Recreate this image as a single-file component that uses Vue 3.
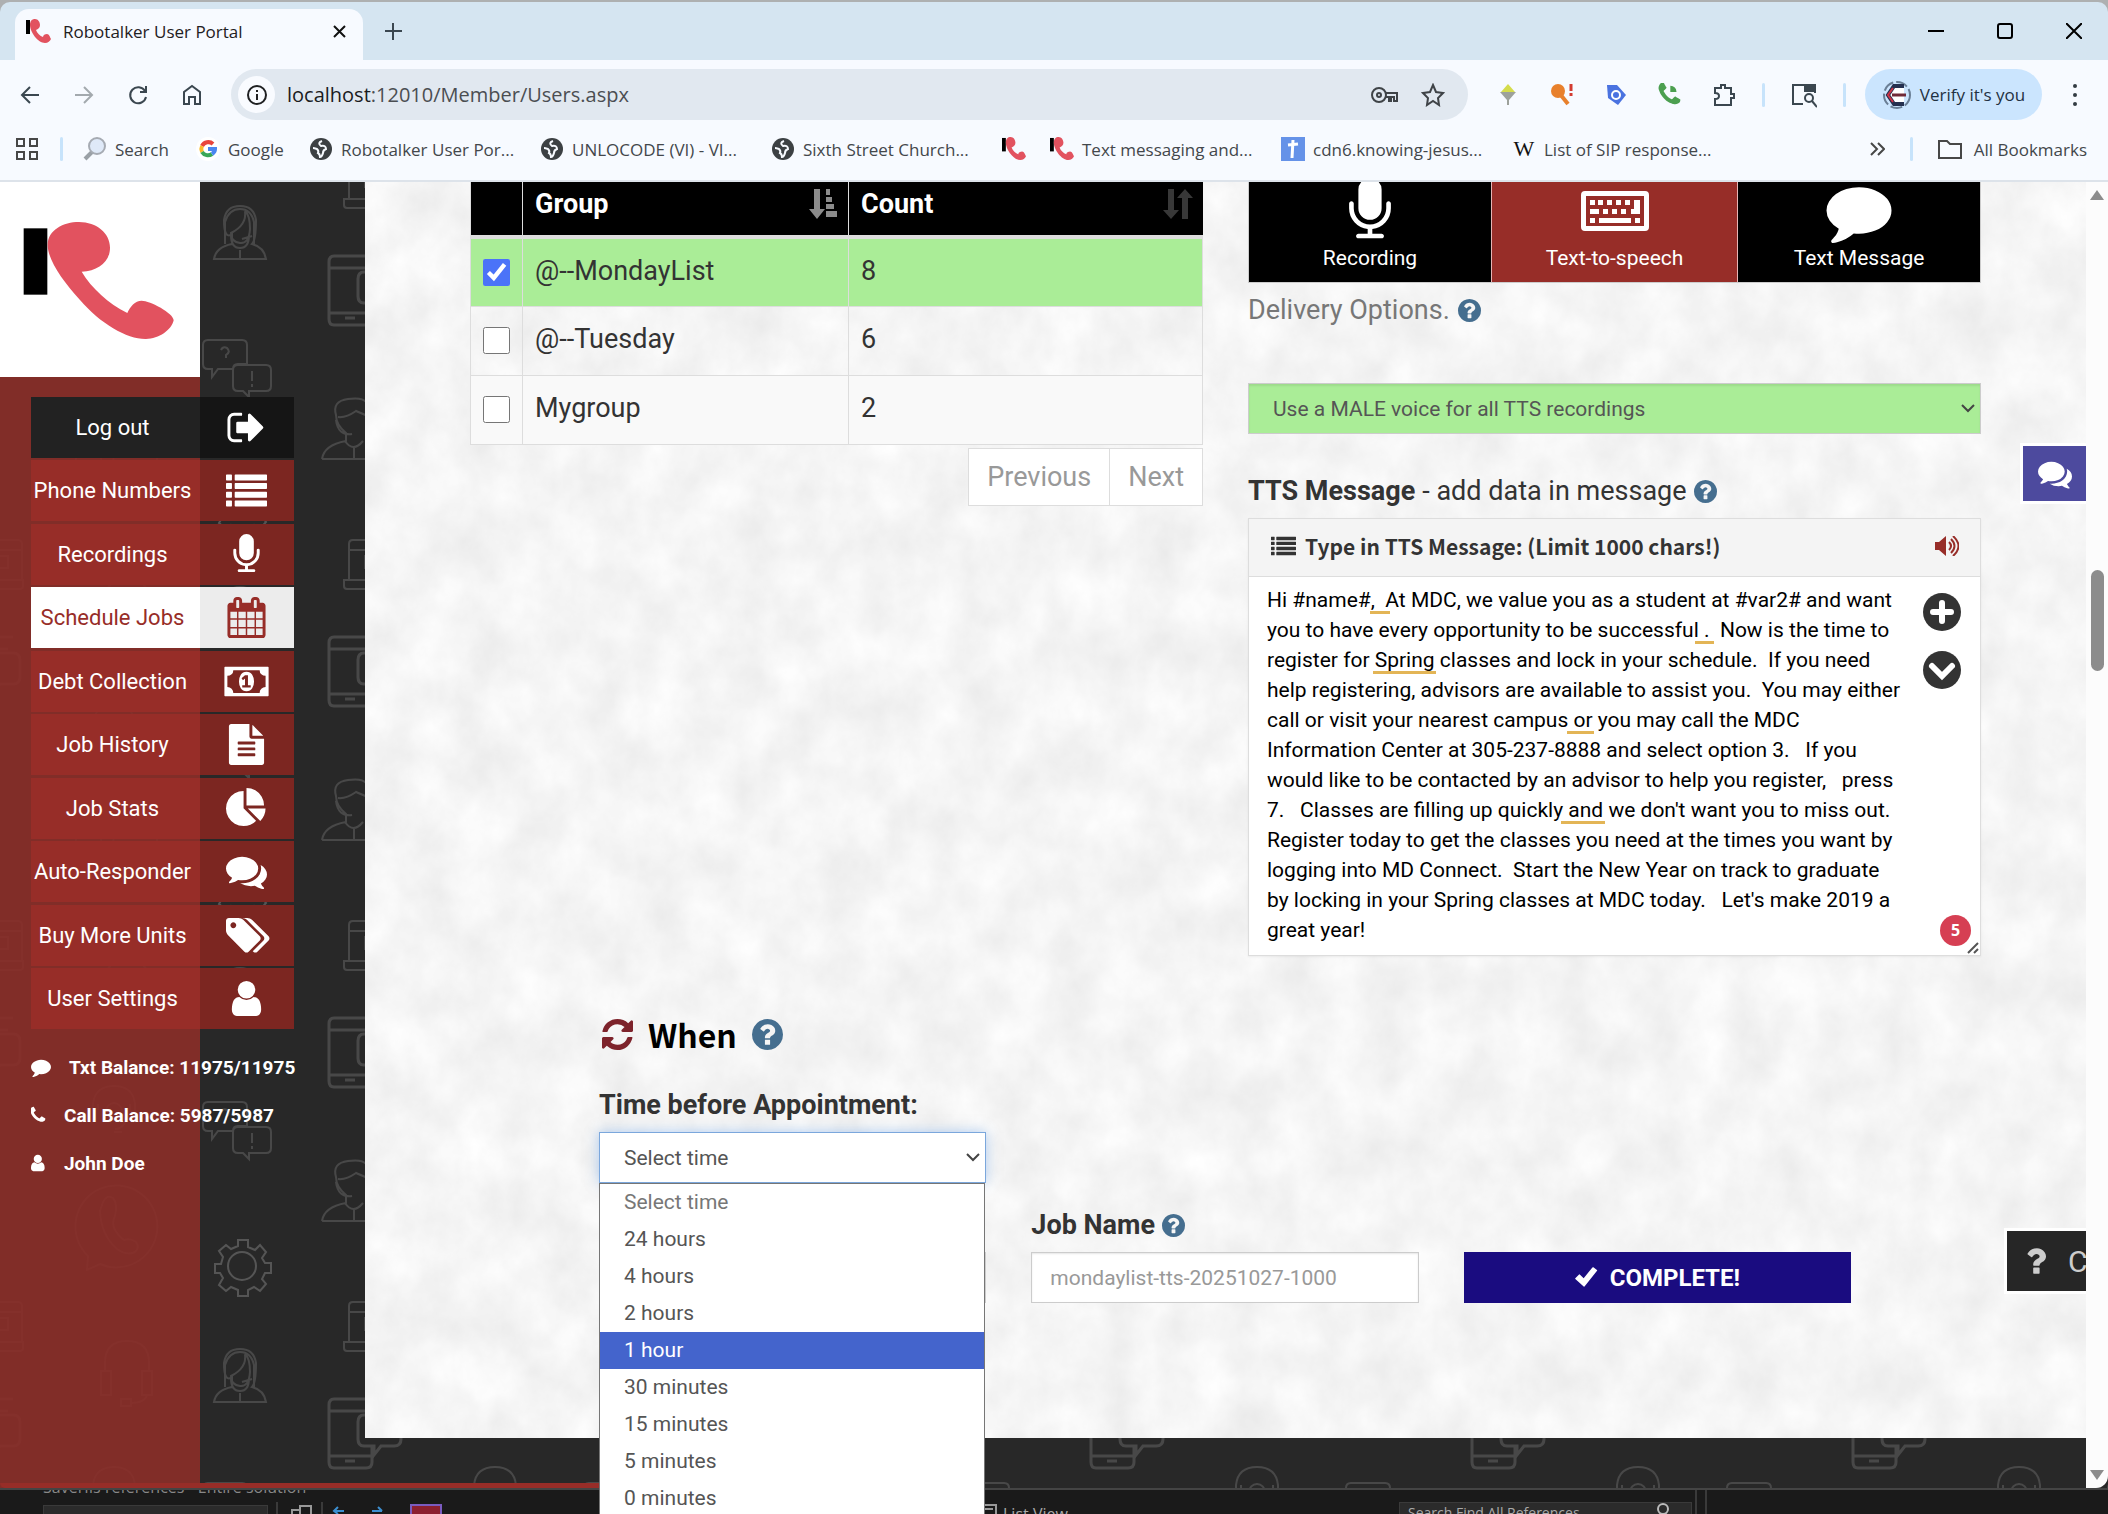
<script setup>
import { ref } from 'vue'

const icons = {
  signOut: 'M704 1440q0 4 1 20t.5 26.5-3 23.5-10 19.5-20.5 6.5h-320q-119 0-203.5-84.5t-84.5-203.5v-704q0-119 84.5-203.5t203.5-84.5h320q13 0 22.5 9.5t9.5 22.5q0 4 1 20t.5 26.5-3 23.5-10 19.5-20.5 6.5h-320q-66 0-113 47t-47 113v704q0 66 47 113t113 47h312l11.5 1 11.5 3 8 5.5 7 9 2 13.5zm928-544q0 26-19 45l-544 544q-19 19-45 19t-45-19-19-45v-288h-448q-26 0-45-19t-19-45v-384q0-26 19-45t45-19h448v-288q0-26 19-45t45-19 45 19l544 544q19 19 19 45z',
  list: 'M30 200h200q30 0 30 30v200q0 30-30 30h-200q-30 0-30-30v-200q0-30 30-30zM30 570h200q30 0 30 30v200q0 30-30 30h-200q-30 0-30-30v-200q0-30 30-30zM30 950h200q30 0 30 30v200q0 30-30 30h-200q-30 0-30-30v-200q0-30 30-30zM30 1330h200q30 0 30 30v200q0 30-30 30h-200q-30 0-30-30v-200q0-30 30-30zM410 200h1352q30 0 30 30v200q0 30-30 30h-1352q-30 0-30-30v-200q0-30 30-30zM410 570h1352q30 0 30 30v200q0 30-30 30h-1352q-30 0-30-30v-200q0-30 30-30zM410 950h1352q30 0 30 30v200q0 30-30 30h-1352q-30 0-30-30v-200q0-30 30-30zM410 1330h1352q30 0 30 30v200q0 30-30 30h-1352q-30 0-30-30v-200q0-30 30-30z',
  mic: 'M1472 704v128q0 221-147.5 384.5t-364.5 187.5v132h256q26 0 45 19t19 45-19 45-45 19h-640q-26 0-45-19t-19-45 19-45 45-19h256v-132q-217-24-364.5-187.5t-147.5-384.5v-128q0-26 19-45t45-19 45 19 19 45v128q0 185 131.5 316.5t316.5 131.5 316.5-131.5 131.5-316.5v-128q0-26 19-45t45-19 45 19 19 45zm-256-384v512q0 132-94 226t-226 94-226-94-94-226v-512q0-132 94-226t226-94 226 94 94 226z',
  calendar: 'M192 1664h288v-288h-288v288zm352 0h320v-288h-320v288zm-352-352h288v-320h-288v320zm352 0h320v-320h-320v320zm-352-384h288v-288h-288v288zm736 736h320v-288h-320v288zm-384-736h320v-288h-320v288zm768 736h288v-288h-288v288zm-384-352h320v-320h-320v320zm-352-864v-288q0-13-9.5-22.5t-22.5-9.5h-64q-13 0-22.5 9.5t-9.5 22.5v288q0 13 9.5 22.5t22.5 9.5h64q13 0 22.5-9.5t9.5-22.5zm736 864h288v-320h-288v320zm-384-384h320v-288h-320v288zm384 0h288v-288h-288v288zm32-480v-288q0-13-9.5-22.5t-22.5-9.5h-64q-13 0-22.5 9.5t-9.5 22.5v288q0 13 9.5 22.5t22.5 9.5h64q13 0 22.5-9.5t9.5-22.5zm384-64v1280q0 52-38 90t-90 38h-1408q-52 0-90-38t-38-90v-1280q0-52 38-90t90-38h128v-96q0-66 47-113t113-47h64q66 0 113 47t47 113v96h384v-96q0-66 47-113t113-47h64q66 0 113 47t47 113v96h128q52 0 90 38t38 90z',
  money: 'M-40 256h1872q30 0 30 30v1220q0 30-30 30h-1872q-30 0-30-30v-1220q0-30 30-30zM320 400q0 110-75 180t-185 70v490q110 0 185 75t75 180h1150q0-110 75-180t185-75v-490q-110 0-185-70t-75-180zM896 470q170 0 250 130t80 296-80 296-250 130-250-130-80-296 80-296 250-130zM830 620l-150 130 60 90 90-70v290h-120v100h370v-100h-120v-440z',
  file: 'M1596 476q14 14 28 36h-472v-472q22 14 36 28zm-476 164h544v1056q0 40-28 68t-68 28h-1344q-40 0-68-28t-28-68v-1600q0-40 28-68t68-28h800v544q0 40 28 68t68 28zm160 736v-64q0-14-9-23t-23-9h-704q-14 0-23 9t-9 23v64q0 14 9 23t23 9h704q14 0 23-9t9-23zm0-256v-64q0-14-9-23t-23-9h-704q-14 0-23 9t-9 23v64q0 14 9 23t23 9h704q14 0 23-9t9-23zm0-256v-64q0-14-9-23t-23-9h-704q-14 0-23 9t-9 23v64q0 14 9 23t23 9h704q14 0 23-9t9-23z',
  pie: 'M768 890l546 546q-106 108-247.5 168t-298.5 60q-209 0-385.5-103t-279.5-279.5-103-385.5 103-385.5 279.5-279.5 385.5-103v762zm187 6h773q0 157-60 298.5t-168 247.5zm709-128h-768v-768q209 0 385.5 103t279.5 279.5 103 385.5z',
  comments: 'M1408 768q0 139-94 257t-256.5 186.5-353.5 68.5q-86 0-176-16-124 88-278 128-36 9-86 16h-3q-11 0-20.5-8t-11.5-21q-1-3-1-6.5t.5-6.5 2-6l2.5-5 3.5-5.5 4-5 4.5-5 4-4.5q5-6 23-25t26-29.5 22.5-29 25-38.5 20.5-44q-124-72-195-177t-71-224q0-139 94-257t256.5-186.5 353.5-68.5 353.5 68.5 256.5 186.5 94 257zm384 256q0 120-71 224.5t-195 176.5q10 24 20.5 44t25 38.5 22.5 29 26 29.5 23 25q1 1 4 4.5t4.5 5 4 5 3.5 5.5l2.5 5 2 6 .5 6.5-1 6.5q-3 14-13 22t-22 7q-50-7-86-16-154-40-278-128-90 16-176 16-271 0-472-132 58 4 88 4 161 0 309-45t264-129q125-92 192-212t67-254q0-77-23-152 129 71 204 178t75 230z',
  tags: 'M576 448q0-53-37.5-90.5t-90.5-37.5-90.5 37.5-37.5 90.5 37.5 90.5 90.5 37.5 90.5-37.5 37.5-90.5zm1067 576q0 53-37 90l-491 492q-39 37-91 37-53 0-90-37l-715-716q-38-37-64.5-101t-26.5-117v-416q0-52 38-90t90-38h416q53 0 117 26.5t102 64.5l715 714q37 39 37 91zm384 0q0 53-37 90l-491 492q-39 37-91 37-36 0-59-14t-53-45l470-470q37-37 37-90 0-52-37-91l-715-714q-38-38-102-64.5t-117-26.5h224q53 0 117 26.5t102 64.5l715 714q37 39 37 91z',
  user: 'M1536 1399q0 109-62.5 187t-150.5 78h-854q-88 0-150.5-78t-62.5-187q0-85 8.5-160.5t31.5-152 58.5-131 94-89 134.5-34.5q131 128 313 128t313-128q76 0 134.5 34.5t94 89 58.5 131 31.5 152 8.5 160.5zm-256-887q0 159-112.5 271.5t-271.5 112.5-271.5-112.5-112.5-271.5 112.5-271.5 271.5-112.5 271.5 112.5 112.5 271.5z',
  comment: 'M1792 896q0 174-120 321.5t-326 233-450 85.5q-70 0-145-8-198 175-460 242-49 14-114 22-17 2-30.5-9t-17.5-29v-1q-3-4-.5-12t2-10 4.5-9.5l6-9 7-8.5 8-9q7-8 31-34.5t34.5-38 31-39.5 32.5-51 27-59 26-76q-157-89-247.5-220t-90.5-281q0-130 71-248.5t191-204.5 286-136.5 348-50.5q244 0 450 85.5t326 233 120 321.5z',
  phone: 'M1600 1240q0 27-10 70.5t-21 68.5q-21 50-122 106-94 51-186 51-27 0-53-3.5t-57.5-12.5-47-14.5-55.5-20.5-49-18q-98-35-175-83-127-79-264-216t-216-264q-48-77-83-175-3-9-18-49t-20.5-55.5-14.5-47-12.5-57.5-3.5-53q0-92 51-186 56-101 106-122 25-11 68.5-21t70.5-10q14 0 21 3 18 6 53 76 11 19 30 54t35 63.5 31 53.5q3 4 17.5 25t21.5 35.5 7 28.5q0 20-28.5 50t-62 55-62 53-28.5 46q0 9 5 22.5t8.5 20.5 14 24 11.5 19q76 137 174 235t235 174q2 1 19 11.5t24 14 20.5 8.5 22.5 5q18 0 46-28.5t53-62 55-62 50-28.5q14 0 28.5 7t35.5 21.5 25 17.5q25 15 53.5 31t63.5 35 54 30q70 35 76 53 3 7 3 21z',
  help: 'M1024 1376v-192q0-14-9-23t-23-9h-192q-14 0-23 9t-9 23v192q0 14 9 23t23 9h192q14 0 23-9t9-23zm256-672q0-88-55.5-163t-138.5-116-170-41q-243 0-371 213-15 24 8 42l132 100q7 6 19 6 16 0 25-12 53-68 86-92 34-24 86-24 48 0 85.5 26t37.5 59q0 38-20 61t-68 45q-63 28-115.5 86.5t-52.5 125.5v36q0 14 9 23t23 9h192q14 0 23-9t9-23q0-19 21.5-49.5t54.5-49.5q32-18 49-28.5t46-35 44.5-48 28-60.5 12.5-81zm384 192q0 209-103 385.5t-279.5 279.5-385.5 103-385.5-103-279.5-279.5-103-385.5 103-385.5 279.5-279.5 385.5-103 385.5 103 279.5 279.5 103 385.5z',
  question: 'M1024 1376v-192q0-14-9-23t-23-9h-192q-14 0-23 9t-9 23v192q0 14 9 23t23 9h192q14 0 23-9t9-23zm256-672q0-88-55.5-163t-138.5-116-170-41q-243 0-371 213-15 24 8 42l132 100q7 6 19 6 16 0 25-12 53-68 86-92 34-24 86-24 48 0 85.5 26t37.5 59q0 38-20 61t-68 45q-63 28-115.5 86.5t-52.5 125.5v36q0 14 9 23t23 9h192q14 0 23-9t9-23q0-19 21.5-49.5t54.5-49.5q32-18 49-28.5t46-35 44.5-48 28-60.5 12.5-81z',
  refresh: 'M1639 1056q0 5-1 7-64 268-268 434.5t-478 166.5q-146 0-282.5-55t-243.5-157l-129 129q-19 19-45 19t-45-19-19-45v-448q0-26 19-45t45-19h448q26 0 45 19t19 45-19 45l-137 137q71 66 161 102t187 36q134 0 250-65t186-179q11-17 53-117 8-23 30-23h192q13 0 22.5 9.5t9.5 22.5zm25-800v448q0 26-19 45t-45 19h-448q-26 0-45-19t-19-45 19-45l138-138q-148-137-349-137-134 0-250 65t-186 179q-11 17-53 117-8 23-30 23h-199q-13 0-22.5-9.5t-9.5-22.5v-7q65-268 270-434.5t480-166.5q146 0 284 55.5t245 156.5l130-129q19-19 45-19t45 19 19 45z',
  check: 'M220 950l230-230q20-20 45 0l240 230 540-660q30-30 60-10l220 160q30 20 5 55l-760 960q-30 35-65 5l-515-460q-25-25 0-50z',
}

const menu = [
  { label: 'Log out', icon: 'signOut', kind: 'dark' },
  { label: 'Phone Numbers', icon: 'list' },
  { label: 'Recordings', icon: 'mic' },
  { label: 'Schedule Jobs', icon: 'calendar', kind: 'active' },
  { label: 'Debt Collection', icon: 'money' },
  { label: 'Job History', icon: 'file' },
  { label: 'Job Stats', icon: 'pie' },
  { label: 'Auto-Responder', icon: 'comments' },
  { label: 'Buy More Units', icon: 'tags' },
  { label: 'User Settings', icon: 'user' },
]

const account = [
  { icon: 'comment', text: 'Txt Balance: 11975/11975' },
  { icon: 'phone', text: 'Call Balance: 5987/5987' },
  { icon: 'user', text: 'John Doe' },
]

const bookmarks = [
  { icon: 'search', text: 'Search', size: 'short' },
  { icon: 'google', text: 'Google', size: 'short' },
  { icon: 'globe', text: 'Robotalker User Por...', size: 'long' },
  { icon: 'globe', text: 'UNLOCODE (VI) - VI...', size: 'long' },
  { icon: 'globe', text: 'Sixth Street Church...', size: 'long' },
  { icon: 'robo', text: '', size: 'bare' },
  { icon: 'robo', text: 'Text messaging and...', size: 'long' },
  { icon: 'cross', text: 'cdn6.knowing-jesus...', size: 'long' },
  { icon: 'wiki', text: 'List of SIP response...', size: 'long' },
]

const groups = ref([
  { name: '@--MondayList', count: 8, checked: true },
  { name: '@--Tuesday', count: 6, checked: false },
  { name: 'Mygroup', count: 2, checked: false },
])

const nb = '\u00a0'
const message = ref([
  `Hi #name#,${nb} At MDC, we value you as a student at #var2# and want`,
  `you to have every opportunity to be successful .${nb} Now is the time to`,
  `register for Spring classes and lock in your schedule.${nb} If you need`,
  `help registering, advisors are available to assist you.${nb} You may either`,
  'call or visit your nearest campus or you may call the MDC',
  `Information Center at 305-237-8888 and select option 3.${nb}${nb} If you`,
  `would like to be contacted by an advisor to help you register,${nb}${nb} press`,
  `7.${nb}${nb} Classes are filling up quickly and we don't want you to miss out.`,
  'Register today to get the classes you need at the times you want by',
  `logging into MD Connect.${nb} Start the New Year on track to graduate`,
  `by locking in your Spring classes at MDC today.${nb}${nb} Let's make 2019 a`,
  'great year!',
].join('\n'))

// grammar hints drawn over the message, in text rows
const hints = [
  { row: 0, x: 103, w: 20 },
  { row: 1, x: 428, w: 19 },
  { row: 2, x: 106, w: 63 },
  { row: 4, x: 300, w: 27 },
  { row: 7, x: 294, w: 44 },
]

const times = ['Select time', '24 hours', '4 hours', '2 hours', '1 hour', '30 minutes', '15 minutes', '5 minutes', '0 minutes']
const highlighted = 4
</script>

<template>
  <div class="desktop">
    <div class="window">
      <header class="tabstrip">
        <div class="tab">
          <svg class="fav" viewBox="0 0 25 25"><rect width="4" height="14" y="1" /><path class="rose" d="M4 6C4 2 6 0 9 0s5 3 5 6-2 4-4 5c1 3 4 6 7 7 0-2 2-3 4-3s3 3 4 5c-1 2-3 4-6 4C12 24 4 13 4 6z" /></svg>
          <span>Robotalker User Portal</span>
          <button class="plain tabclose" aria-label="Close tab"><svg width="13" height="13" viewBox="0 0 13 13"><path d="M1 1l11 11M12 1L1 12" stroke="#111" stroke-width="2" /></svg></button>
        </div>
        <button class="plain newtab" aria-label="New tab"><svg width="17" height="17" viewBox="0 0 17 17"><path d="M8 0v17M0 8h17" stroke="#3b4750" stroke-width="2" /></svg></button>
        <div class="winctl">
          <button class="plain" aria-label="Minimize"><svg width="16" height="16" viewBox="0 0 16 16"><path d="M0 8h16" stroke="#000" stroke-width="2" /></svg></button>
          <button class="plain" aria-label="Maximize"><svg width="16" height="16" viewBox="0 0 16 16"><rect x="1" y="1" width="14" height="14" rx="2" fill="none" stroke="#000" stroke-width="2" /></svg></button>
          <button class="plain" aria-label="Close"><svg width="16" height="16" viewBox="0 0 16 16"><path d="M0 0l16 16M16 0L0 16" stroke="#000" stroke-width="2" /></svg></button>
        </div>
      </header>

      <div class="toolbar">
        <button class="plain tool" aria-label="Back"><svg viewBox="0 0 24 24"><path d="M21 12H4M12 4l-8 8 8 8" /></svg></button>
        <button class="plain tool off" aria-label="Forward"><svg viewBox="0 0 24 24"><path d="M3 12h17M12 4l8 8-8 8" /></svg></button>
        <button class="plain tool" aria-label="Reload"><svg viewBox="0 0 24 24"><path d="M19 8a8 8 0 1 0 1 6M20 3v6h-6" /></svg></button>
        <button class="plain tool" aria-label="Home"><svg viewBox="0 0 24 24"><path d="M4 21V9l8-6 8 6v12h-5v-7H9v7z" /></svg></button>
        <div class="omnibox">
          <span class="info"><svg width="22" height="22" viewBox="0 0 22 22"><circle cx="11" cy="11" r="9" fill="none" stroke="#1f2022" stroke-width="2" /><path d="M11 10v6M11 6v2" stroke="#1f2022" stroke-width="2" /></svg></span>
          <span class="url"><b>localhost</b>:12010/Member/Users.aspx</span>
          <svg class="key" viewBox="0 0 28 18"><circle cx="8" cy="9" r="7" /><circle cx="8" cy="9" r="2" /><path d="M15 7h11v8h-3v-4h-3v4h-2v-4h-4" /></svg>
          <svg class="star" viewBox="0 0 24 24"><path d="M12 2l3 7 7 1-5 5 1 7-6-4-6 4 1-7-5-5 7-1z" /></svg>
        </div>
        <div class="exts">
          <span class="tool"><svg viewBox="0 0 24 24"><path d="M4 9h16l-7 8v5h-2v-5z" fill="#9da19b" stroke="none" /><path d="M12 1l7 8H5z" fill="#d5dc4c" stroke="none" /></svg></span>
          <span class="tool"><svg viewBox="0 0 24 24"><circle cx="8" cy="8" r="7" fill="#e8802c" stroke="none" /><path d="M10 11l8 10" stroke="#e8802c" stroke-width="4" /><path d="M21 1v7M21 10v3" stroke="#d33b31" stroke-width="3" /></svg></span>
          <span class="tool"><svg viewBox="0 0 24 24"><path d="M3 2h10l9 10-8 10L4 15z" fill="#4a72e0" stroke="none" /><circle cx="12" cy="12" r="4" stroke="#fff" /></svg></span>
          <span class="tool"><svg viewBox="156 156 1550 1550"><path :d="icons.phone" fill="#4c9f50" stroke="none" /><path d="M950 330q380 10 400 400h-400z" fill="#4c9f50" stroke="none" /></svg></span>
          <span class="tool"><svg viewBox="0 0 24 24"><path d="M3 5h6V2h4v3h6v6h3v4h-3v7H3v-6q4 0 4-3t-4-3z" /></svg></span>
        </div>
        <i class="bar"></i>
        <span class="tool wide"><svg viewBox="0 0 26 26"><path d="M12 22H2V3h22v8" /><path d="M14 3h10v6H14z" fill="#3b4750" /><circle cx="18" cy="16" r="4" /><path d="M21 19l5 6" /></svg></span>
        <i class="bar"></i>
        <button class="plain verify">
          <svg width="30" height="30" viewBox="0 0 30 30"><circle cx="15" cy="15" r="13" fill="none" stroke="#6a7f96" stroke-width="2" stroke-dasharray="12 3" /><path d="M22 6H12l-6 9 6 9h10" fill="#fff" stroke="#25304f" stroke-width="4" /><path d="M11 8l-5 7 5 7" fill="none" stroke="#cf3346" stroke-width="2" /><path d="M10 15h14" stroke="#702a38" stroke-width="3" /></svg>
          Verify it's you
        </button>
        <button class="plain dots" aria-label="Menu"><i></i><i></i><i></i></button>
      </div>

      <nav class="bookmarks">
        <svg class="apps" viewBox="0 0 22 22"><path d="M1 1h7v7H1zM14 1h7v7h-7zM1 14h7v7H1zM14 14h7v7h-7z" /></svg>
        <i class="bar"></i>
        <a v-for="(b, i) in bookmarks" :key="i" href="#" :class="['bm', b.size]">
          <svg v-if="b.icon === 'search'" viewBox="0 0 24 24"><path d="M9 15l-7 7" stroke="#9aa0a6" stroke-width="4" /><circle cx="14" cy="9" r="8" fill="#dfe9f8" stroke="#a6abb3" stroke-width="2" /></svg>
          <svg v-else-if="b.icon === 'google'" viewBox="0 0 24 24"><circle cx="12" cy="12" r="12" fill="#fff" /><g fill="none" stroke-width="4"><path d="M17 7A7 7 0 0 0 6 9" stroke="#e8453c" /><path d="M6 9a7 7 0 0 0 0 6" stroke="#f9bb2d" /><path d="M6 15a7 7 0 0 0 10 2" stroke="#3aa757" /><path d="M16 17q3-2 3-5h-7" stroke="#4a86f0" /></g></svg>
          <svg v-else-if="b.icon === 'globe'" viewBox="0 0 24 24"><circle cx="12" cy="12" r="11" fill="#3c4043" /><path d="M13 4q-5 2-1 5 5-1 5 3-3 1-3 4-1 4-3 4 0-3-2-4 1-2-1-4-3-1-4-1" fill="none" stroke="#f7faff" stroke-width="2" /></svg>
          <svg v-else-if="b.icon === 'robo'" viewBox="0 0 25 25"><rect width="4" height="14" y="1" /><path class="rose" d="M4 6C4 2 6 0 9 0s5 3 5 6-2 4-4 5c1 3 4 6 7 7 0-2 2-3 4-3s3 3 4 5c-1 2-3 4-6 4C12 24 4 13 4 6z" /></svg>
          <svg v-else-if="b.icon === 'cross'" viewBox="0 0 24 24"><rect width="24" height="24" fill="#6592e8" /><path d="M12 3l-1 18M7 8l10-1" stroke="#fff" stroke-width="3" /></svg>
          <span v-else class="wiki">W</span>
          <span v-if="b.text">{{ b.text }}</span>
        </a>
        <div class="bmend">
          <svg width="15" height="14" viewBox="0 0 15 14"><path d="M1 1l6 6-6 6M8 1l6 6-6 6" fill="none" stroke="#474747" stroke-width="2" /></svg>
          <i class="bar"></i>
          <a href="#" class="bm all"><svg viewBox="0 0 24 24"><path d="M1 4h8l3 3h11v14H1z" fill="none" stroke="#474747" stroke-width="2" /></svg><span>All Bookmarks</span></a>
        </div>
      </nav>

      <div class="viewport">
        <svg class="pattern" aria-hidden="true">
          <defs>
            <pattern id="support" width="381" height="381" patternUnits="userSpaceOnUse" y="-182">
              <g id="shapes" fill="none" stroke="#484848" stroke-width="2">
                <path d="M214 259q2-12 18-15v-10q-8 6-8-14 2-14 16-14t16 14q0 20-4 24 12 3 14 15zM225 244v-22q4-13 15-13t14 13v22M231 235q0 13 9 13t9-13M240 250v9M245 211q2 14-14 22 0 9 9 10t10-14q0-14-5-18M242 239l10-3" />
                <path d="M334 256h60M334 325h32q6 0 6-6v-16M334 256q-5 0-5 6v57q0 6 5 6M329 268h60M329 313h43M345 318h10" stroke-width="3" />
                <path d="M364 272h30q7 0 7 7v17q0 7-7 7h-13l-7 9v-9h-10q-6 0-6-7v-17q0-7 6-7z" stroke-width="3" />
                <path d="M208 340h34q5 0 5 5v19h-9q-5 0-5 5h-15l-6 8v-8h-4q-5 0-5-5v-19q0-5 5-5zM238 365h28q5 0 5 5v16q0 5-5 5h-17v6l-6-6h-5q-5 0-5-5v-16q0-5 5-5zM252 371v10M252 384v3M221 350q2-4 6-2 4 4-1 7v3" />
                <path d="M322 459q2-14 24-18v-8q-10-8-10-18-4-14 12-16 14-2 18 3M338 417q8 1 18-6l14 6M336 420q2 16 16 14M345 441q8 12 18 0M354 448v11M322 459h55" />
                <path d="M344 580h60v6q0 3-3 3h-54q-3 0-3-3zM349 580v-36q0-4 4-4h46q4 0 4 4v36M349 550h54M365 556h24v12h-24z" />
                <g stroke="#555"><circle cx="242" cy="504" r="14" /><path d="M238 478h10v7l7 3 5-5 6 7-4 6 3 5h6v10h-6l-3 6 4 5-6 7-6-4-6 3v6h-10v-6l-7-3-5 4-7-6 4-7-3-5h-5v-9h6l2-7-4-6 7-6 5 4 7-3z" /></g>
                <path d="M88 494A41 41 0 1 1 100 502L87 508zM103 440q4-8 10-4 5 6 2 18-3 6-1 12 4 8 10 12 6-2 12 2 4 6-1 10-8 4-18-3-16-14-17-38z" />
                <path d="M105 609v-8q0-22 22-22t22 22v8M101 609h10v24h-10zM142 609h10v24h-10zM147 633q-2 8-16 8M121 637h10v7h-10z" />
                <path d="M93 348v-6q2-18 21-18t21 18v6q-2 5-5 0v-6M98 342v6M114 370h8M127 353q-2 14-12 14" /><circle cx="114" cy="349" r="8" />
              </g>
              <use href="#shapes" x="-381" /><use href="#shapes" y="-381" /><use href="#shapes" x="-381" y="-381" />
            </pattern>
          </defs>
          <rect width="100%" height="100%" fill="#282828" />
          <rect width="100%" height="100%" fill="url(#support)" />
        </svg>

        <aside>
          <div class="brandcol"></div>
          <div class="side">
            <a href="#" class="logo" aria-label="Robotalker">
              <svg viewBox="0 6 600 585"><rect x="71" y="145" width="71" height="199" /><path class="rose" d="M143 195C143 150 190 126 237 126c53 0 93 34 93 77 0 42-35 70-85 72 30 50 80 95 137 124 8-19 23-37 43-37 25 0 97 38 96 59-6 29-46 57-85 56-56 0-136-47-196-117-50-55-97-120-97-165z" /></svg>
            </a>
            <nav class="menu">
              <a v-for="m in menu" :key="m.label" href="#" :class="['item', m.kind]">
                <span class="label">{{ m.label }}</span>
                <span class="glyph"><svg :viewBox="m.icon === 'tags' ? '128 0 1792 1792' : '0 0 1792 1792'"><path :d="icons[m.icon]" fill-rule="evenodd" /></svg></span>
              </a>
            </nav>
            <ul class="account">
              <li v-for="a in account" :key="a.text"><svg :class="a.icon" :viewBox="a.icon === 'comment' ? '0 0 1792 1792' : '256 0 1408 1792'"><path :d="icons[a.icon]" /></svg>{{ a.text }}</li>
            </ul>
          </div>
        </aside>

        <main>
          <svg class="paper" aria-hidden="true">
            <filter id="fibre" x="0" y="0" width="100%" height="100%" color-interpolation-filters="sRGB">
              <feTurbulence type="fractalNoise" baseFrequency="0.022 0.018" numOctaves="5" seed="11" />
              <feColorMatrix values=".09 0 0 0 .915  .09 0 0 0 .915  .09 0 0 0 .915  0 0 0 0 1" />
            </filter>
            <rect width="100%" height="100%" filter="url(#fibre)" />
          </svg>

          <div class="columns">
            <section>
              <table>
                <thead>
                  <tr>
                    <th class="pick"></th>
                    <th class="name"><div>Group<svg width="30" height="30" viewBox="0 0 30 30"><path d="M6 0h6v20h5l-8 10L1 20h5zM18 0h4v6h-4zM18 8h6v5h-6zM18 15h8v5h-8zM18 22h11v6H18z" fill="#8b8b8b" /></svg></div></th>
                    <th><div>Count<svg width="30" height="30" viewBox="0 0 30 30"><path d="M5 0h6v21h5L8 30 0 21h5zM19 30h6V9h5L22 0l-8 9h5z" fill="#383838" /></svg></div></th>
                  </tr>
                </thead>
                <tbody>
                  <tr v-for="g in groups" :key="g.name" :class="{ on: g.checked }">
                    <td class="pick"><input v-model="g.checked" type="checkbox" :aria-label="g.name"></td>
                    <td>{{ g.name }}</td>
                    <td>{{ g.count }}</td>
                  </tr>
                </tbody>
              </table>
              <div class="pager"><button>Previous</button><button>Next</button></div>
            </section>

            <section>
              <div class="kinds">
                <button><svg viewBox="0 0 1792 1792"><path :d="icons.mic" /></svg>Recording</button>
                <button class="sel"><svg viewBox="0 0 68 65"><path d="M4 13h60q4 0 4 4v32q0 4-4 4H4q-4 0-4-4V17q0-4 4-4zM5 18v30h58V18zM9 22h5v5H9zM17 22h5v5h-5zM26 22h5v5h-5zM35 22h5v5h-5zM44 22h5v5h-5zM53 22h6v14h-9v-5h3zM9 31h9v5H9zM22 31h5v5h-5zM31 31h5v5h-5zM40 31h5v5h-5zM9 40h5v5H9zM18 40h32v5H18zM54 40h5v5h-5z" fill-rule="evenodd" /></svg>Text-to-speech</button>
                <button><svg viewBox="0 0 1792 1792"><path :d="icons.comment" /></svg>Text Message</button>
              </div>
              <p class="delivery">Delivery Options. <svg viewBox="128 128 1536 1536"><path :d="icons.help" /></svg></p>
              <div class="pickbox voice">
                <select aria-label="Voice"><option>Use a MALE voice for all TTS recordings</option></select>
                <svg viewBox="0 0 14 9"><path d="M1 1l6 6 6-6" /></svg>
              </div>
              <label class="ttslabel" for="tts"><b>TTS Message</b> - add data in message <svg viewBox="128 128 1536 1536"><path :d="icons.help" /></svg></label>
              <div class="panel">
                <div class="panelhead">
                  <svg width="25" height="24" viewBox="0 0 1792 1792" preserveAspectRatio="none"><path :d="icons.list" /></svg>
                  <h3>Type in TTS Message: (Limit 1000 chars!)</h3>
                  <button class="plain speak" aria-label="Play"><svg width="24" height="20" viewBox="0 0 24 20"><path d="M0 6h4l7-6v20l-7-6H0z" fill="#972d28" /><path d="M14 6q4 4 0 8M16 3q7 7 0 14M18 0q11 10 0 20" fill="none" stroke="#972d28" stroke-width="2" /></svg></button>
                </div>
                <div class="editor">
                  <textarea id="tts" v-model="message" rows="12" spellcheck="false"></textarea>
                  <i v-for="h in hints" :key="h.row" class="hint" :style="{ top: 34 + h.row * 30 + 'px', left: 18 + h.x + 'px', width: h.w + 'px' }"></i>
                  <div class="tools">
                    <button class="plain" aria-label="Add"><svg viewBox="0 0 39 39"><circle cx="19" cy="19" r="19" /><path d="M19 10v18M10 19h18" stroke-width="6" /></svg></button>
                    <button class="plain" aria-label="Expand"><svg viewBox="0 0 39 39"><circle cx="19" cy="19" r="19" /><path d="M9 15l10 10 10-10" stroke-width="6" /></svg></button>
                  </div>
                  <span class="issues">5</span>
                  <svg class="grip" viewBox="0 0 12 12"><path d="M1 11L11 1M7 11l4-4" stroke="#555" stroke-width="2" /></svg>
                </div>
              </div>
            </section>
          </div>

          <section class="when">
            <h2><svg viewBox="128 128 1536 1536" fill="#7d232b"><path :d="icons.refresh" /></svg>When<svg viewBox="128 128 1536 1536" fill="#456e8f"><path :d="icons.help" /></svg></h2>
            <div class="fields">
              <div class="field">
                <label for="before">Time before Appointment:</label>
                <div class="pickbox focus">
                  <select id="before"><option>Select time</option></select>
                  <svg viewBox="0 0 14 9"><path d="M1 1l6 6 6-6" /></svg>
                  <ul class="options" role="listbox">
                    <li v-for="(t, i) in times" :key="t" role="option" :class="{ hot: i === highlighted, dim: i === 0 }">{{ t }}</li>
                  </ul>
                </div>
              </div>
            </div>
            <div class="fields last">
              <input type="text" aria-label="Time">
              <div class="field">
                <label for="job">Job Name <svg viewBox="128 128 1536 1536" fill="#456e8f"><path :d="icons.help" /></svg></label>
                <input id="job" type="text" placeholder="mondaylist-tts-20251027-1000">
              </div>
              <button class="complete"><svg viewBox="200 200 1420 1420"><path :d="icons.check" /></svg>COMPLETE!</button>
            </div>
          </section>
        </main>

        <div class="scroll"><i class="up"></i><i class="thumb"></i><i class="down"></i></div>
        <button class="float chat" aria-label="Chat"><svg viewBox="0 0 1792 1792"><path :d="icons.comments" /></svg></button>
        <button class="float ask"><svg viewBox="480 384 800 1024"><path :d="icons.question" /></svg>C</button>
      </div>
      <div class="redline"></div>
    </div>

    <footer class="ide">
      <span class="idetitle">SaverIIs references - Entire solution</span>
      <span class="idebox"></span>
      <svg width="110" height="12" viewBox="0 0 110 12" fill="none" stroke-width="2"><path d="M1 0v12M46 0v12" stroke="#3a3a3a" /><path d="M24 12V4h11v8M16 12V8h8" stroke="#999" /><path d="M58 9h10M62 5l-4 4 4 3M96 9h10M102 5l4 4" stroke="#3c8fd0" /></svg>
      <span class="idecode"></span>
      <svg class="ideicon" width="12" height="10" viewBox="0 0 12 10" fill="none"><path d="M0 1h11v9M0 5h8" stroke="#999" stroke-width="2" /></svg>
      <span class="idenote">List View</span>
      <span class="idebox search">Search Find All References<svg width="14" height="14" viewBox="0 0 14 14"><circle cx="8" cy="6" r="5" fill="none" stroke="#bbb" stroke-width="2" /></svg></span>
      <span class="idesplit"></span>
    </footer>
  </div>
</template>

<style>
body { margin: 0; overflow: hidden; }
</style>

<style scoped>
* { box-sizing: border-box; }
svg { flex: none; display: block; }
a { text-decoration: none; color: inherit; }
button, select, input, textarea { font-family: inherit; border-radius: 0; margin: 0; }
.plain { border: 0; background: none; padding: 0; display: flex; align-items: center; justify-content: center; }
.rose { fill: #e2525f; }

.desktop { position: relative; height: 100vh; overflow: hidden; background: #aeb0b1; font-family: Roboto, "Liberation Sans", sans-serif; display: flex; flex-direction: column; }
.window { flex: 1; min-height: 0; margin-top: 2px; display: flex; flex-direction: column; position: relative; z-index: 1; }

/* browser chrome */
.tabstrip, .toolbar, .bookmarks { flex: none; display: flex; align-items: center; font-family: "Open Sans", "Noto Sans", sans-serif; color: #1f2022; }
.tabstrip { height: 58px; background: #d5e5f1; border-radius: 10px 10px 0 0; font-size: 17px; padding-left: 15px; }
.tab { align-self: flex-end; width: 348px; height: 51px; background: #f7faff; border-radius: 14px 14px 0 0; display: flex; align-items: center; padding: 0 17px 7px 11px; gap: 12px; }
.fav { width: 25px; height: 25px; }
.tabclose { margin-left: auto; }
.newtab { width: 60px; }
.winctl { margin-left: auto; display: flex; }
.winctl button { width: 69px; height: 58px; }
.toolbar { height: 69px; background: #f7faff; padding-left: 3px; }
.tool { width: 54px; height: 54px; display: flex; align-items: center; justify-content: center; }
.tool svg { width: 24px; height: 24px; fill: none; stroke: #3b4750; stroke-width: 2; }
.tool.off svg { stroke: #a3a9ae; }
.tool.wide { width: 78px; }
.tool.wide svg { width: 26px; height: 26px; }
.omnibox { flex: 1; height: 51px; margin-left: 12px; border-radius: 26px; background: #e1e8f0; display: flex; align-items: center; padding: 0 23px 0 7px; }
.info { width: 37px; height: 37px; border-radius: 50%; background: #f9fbff; display: flex; align-items: center; justify-content: center; }
.url { margin-left: 12px; font-size: 20px; color: #4b4e52; flex: 1; }
.url b { font-weight: 400; color: #1b1c1e; }
.key { width: 28px; height: 18px; fill: none; stroke: #3f4347; stroke-width: 2; }
.star { width: 24px; height: 24px; margin-left: 22px; fill: none; stroke: #3f4347; stroke-width: 2; }
.exts { display: flex; margin-left: 13px; }
.bar { width: 3px; height: 24px; border-radius: 2px; background: #c7e3fb; }
.exts + .bar { margin-left: 11px; }
.verify { margin-left: 19px; width: 177px; height: 51px; border-radius: 26px; background: #cbe5fe; gap: 8px; font-size: 17px; color: #1f3142; }
.dots { flex-direction: column; gap: 5px; width: 66px; }
.dots i { width: 4px; height: 4px; border-radius: 50%; background: #333b43; }
.bookmarks { height: 53px; padding: 0 21px 11px 16px; background: #f7faff; border-bottom: 2px solid #dde3ea; font-size: 17px; color: #43474b; }
.apps { width: 22px; height: 22px; fill: none; stroke: #474747; stroke-width: 2; margin-right: 22px; }
.apps + .bar { margin-right: 20px; }
.bm { display: flex; align-items: center; gap: 8px; white-space: nowrap; }
.bm svg { width: 24px; height: 24px; }
.bm.short { width: 113px; }
.bm.long { width: 231px; }
.bm.bare { width: 48px; }
.bm.all { gap: 12px; }
.wiki { font: 22px "Liberation Serif", serif; color: #111; width: 24px; text-align: center; }
.bmend { margin-left: auto; display: flex; align-items: center; gap: 25px; }

/* page */
.viewport { position: relative; flex: 1; min-height: 0; display: flex; align-items: flex-start; }
.pattern { position: absolute; width: 100%; height: 100%; }
aside { position: relative; width: 365px; height: 100%; flex: none; }
.brandcol { position: absolute; top: 0; bottom: 0; left: 0; width: 200px; background: rgba(139, 46, 40, .9); }
.side { position: relative; }
.logo { display: block; width: 200px; height: 195px; background: #fff; }
.menu { margin: 20px 0 0 31px; width: 263px; height: 632px; display: flex; flex-direction: column; justify-content: space-between; }
.item { display: flex; height: 61px; color: #fff; font-size: 22px; }
.label { width: 169px; padding-right: 6px; background: #972d28; display: flex; align-items: center; justify-content: center; white-space: nowrap; }
.glyph { flex: 1; padding-right: 2px; background: #7c2621; display: flex; align-items: center; justify-content: center; }
.glyph svg { width: 41px; height: 41px; fill: currentColor; overflow: visible; }
.dark .label { background: #222; }
.dark .glyph { background: #151515; }
.active { color: #972d28; }
.active .label { background: #fff; }
.active .glyph { background: #ececec; }
.account { list-style: none; margin: 14px 0 0 31px; padding: 0; color: #fff; font-size: 19px; font-weight: 700; }
.account li { display: flex; align-items: center; height: 48px; gap: 18px; white-space: nowrap; }
.account svg { width: 15px; height: 20px; fill: #fff; }
.account svg.comment { width: 20px; }

main { position: relative; flex: 1; min-width: 0; color: #333; padding-bottom: 135px; }
.paper { position: absolute; inset: 0; width: 100%; height: 100%; background: #f5f5f5; }
.columns { position: relative; display: grid; grid-template-columns: 1fr 1fr; gap: 45px; padding: 0 105px; }
table { width: 100%; border-collapse: collapse; font-size: 27px; table-layout: fixed; }
th { height: 55px; padding: 0 10px 10px 12px; background: #000; color: #fff; text-align: left; border-left: 1px solid #ddd; border-bottom: 4px solid #ddd; }
th div { display: flex; justify-content: space-between; align-items: center; }
th.name { width: 326px; }
td { height: 69px; padding: 0 12px 3px; border: 1px solid #ddd; }
.pick { width: 52px; padding: 0 0 3px; text-align: center; }
.pick input { width: 27px; height: 27px; vertical-align: middle; accent-color: #4b73f8; }
tr.on { background: #aaed97; }
tbody tr:nth-child(3) { background: #f9f9f9; }
.pager { display: flex; justify-content: flex-end; margin-top: 3px; }
.pager button { height: 58px; padding: 0 18px; border: 1px solid #ddd; background: #fff; color: #999; font-size: 27px; }
.pager button + button { border-left: 0; }

.kinds { display: grid; grid-template-columns: 242px 1fr 242px; height: 101px; overflow: hidden; border: 1px solid #ccc; border-top: 0; }
.kinds button { border: 0; padding: 0; background: #000; color: #fff; font-size: 21px; display: flex; flex-direction: column; align-items: center; }
.kinds svg { width: 68px; height: 65px; margin: -4px 0 3px; fill: #fff; }
.kinds .sel { background: #972d28; border: solid #e5b5b5; border-width: 0 1px; }
p.delivery { margin: 9px 0 0; font-size: 27px; line-height: 36px; color: #777; display: flex; align-items: center; gap: 8px; }
.delivery svg, .ttslabel svg, .field label svg { width: 23px; height: 23px; fill: #456e8f; }
.pickbox { position: relative; }
.pickbox select { display: block; width: 100%; height: 51px; padding: 0 24px; appearance: none; border: 1px solid #ccc; background: #fff; color: #555; font-size: 21px; outline: 0; }
.pickbox > svg { position: absolute; right: 6px; top: 21px; width: 14px; height: 9px; fill: none; stroke: #444; stroke-width: 2; }
.voice { margin-top: 55px; }
.voice select { background: #aaed97; box-shadow: inset 0 2px 2px rgba(0, 0, 0, .08); }
.ttslabel { display: flex; align-items: center; gap: 7px; margin: 39px 0 9px; line-height: 36px; font-size: 27px; }
.panel { border: 1px solid #ddd; background: #fff; box-shadow: 0 1px 2px rgba(0, 0, 0, .06); }
.panelhead { height: 58px; background: #f4f4f4; border-bottom: 1px solid #ddd; display: flex; align-items: center; padding: 0 21px 4px 22px; fill: #333; }
.panelhead h3 { margin: 0 0 0 9px; font: 700 21px/30px "Noto Sans CJK SC", "Noto Sans", sans-serif; color: #333; }
.speak { margin-left: auto; }
.editor { position: relative; }
.editor textarea { display: block; width: 100%; height: 378px; border: 0; padding: 8px 70px 9px 18px; color: #000; background: #fff; font-size: 21px; line-height: 30px; outline: 0; resize: none; overflow: hidden; white-space: pre; }
.hint { position: absolute; height: 3px; background: #e3b556; pointer-events: none; }
.tools { position: absolute; right: 18px; top: 16px; display: grid; gap: 19px; }
.tools svg { width: 39px; height: 39px; fill: #333; }
.tools path { stroke: #fff; fill: none; stroke-linecap: round; }
.issues { position: absolute; right: 9px; bottom: 9px; width: 31px; height: 31px; border-radius: 50%; background: #d63f53; color: #fff; font: 700 16px/31px "Open Sans", sans-serif; text-align: center; }
.grip { position: absolute; right: 1px; bottom: 1px; width: 12px; height: 12px; }

.when { position: relative; padding: 54px 235px 0 234px; }
.when h2 { margin: 0; display: flex; align-items: center; font: 700 32px/48px "Noto Sans CJK SC", "Noto Sans", sans-serif; color: #000; gap: 15px; }
.when h2 svg { width: 31px; height: 31px; }
.when h2 svg:first-child { margin-left: 3px; }
.fields { display: grid; grid-template-columns: repeat(3, 1fr); column-gap: 45px; align-items: end; }
.fields:not(.last) { margin-top: 29px; }
.field label { display: flex; align-items: center; gap: 7px; font-size: 27px; font-weight: 700; line-height: 36px; margin-bottom: 9px; }
.focus select { border-color: #7ba7dc; box-shadow: 0 0 12px rgba(102, 160, 233, .5); }
.last { margin-top: 24px; }
.last input { width: 100%; height: 51px; display: block; padding: 0 18px; border: 1px solid #ccc; background: #fff; font-size: 21px; box-shadow: inset 0 1px 2px rgba(0, 0, 0, .1); }
.last input::placeholder { color: #999; }
.complete { height: 51px; border: 0; background: #1a0c80; color: #fff; font-size: 24px; font-weight: 700; display: flex; align-items: center; justify-content: center; gap: 12px; }
.complete svg { width: 23px; height: 23px; fill: #fff; }
.options { position: absolute; z-index: 5; left: 0; right: 1px; top: 51px; margin: 0; padding: 0; list-style: none; background: #fff; border: 1px solid #767676; color: #555; font-size: 21px; }
.options li { height: 37px; line-height: 37px; padding-left: 24px; }
.options .dim { color: #777; }
.options .hot { background: #4464cc; color: #fff; }

.scroll { position: relative; width: 22px; height: 100%; background: #fcfcfc; flex: none; border-radius: 0 0 12px 0; display: flex; flex-direction: column; align-items: center; padding: 8px 0; }
.scroll .up { border: 7px solid transparent; border-top: 0; border-bottom: 10px solid #8c8c8c; }
.scroll .thumb { width: 13px; height: 101px; border-radius: 7px; background: #8c8c8c; margin-top: 370px; }
.scroll .down { border: 7px solid transparent; border-bottom: 0; border-top: 10px solid #8c8c8c; margin-top: auto; }
.float { position: absolute; right: 22px; border: 3px solid #fff; border-right: 0; padding: 0; display: flex; align-items: center; color: #ccc; font-size: 30px; overflow: hidden; }
.chat { top: 261px; width: 66px; height: 61px; background: #4d4a9e; justify-content: center; }
.chat svg { width: 34px; height: 34px; fill: #fff; }
.ask { top: 1046px; width: 82px; height: 66px; background: #262626; padding-left: 19px; gap: 22px; }
.ask svg { width: 20px; height: 26px; fill: #ccc; }
.redline { position: absolute; left: 0; width: 600px; bottom: 0; height: 5px; background: #972d28; border-radius: 0 0 0 12px; }

/* editor strip behind the browser */
.ide { position: relative; flex: none; height: 26px; background: #1a1a1a; border-top: 2px solid #444; display: flex; align-items: flex-end; color: #aaa; font: 16px/24px "Open Sans", sans-serif; overflow: hidden; padding-left: 43px; gap: 8px; white-space: nowrap; }
.idetitle { position: absolute; left: 43px; top: -15px; color: #888; font-size: 16px; }
.idebox { width: 225px; height: 9px; background: #2b2b2b; border: 1px solid #3a3a3a; border-bottom: 0; }
.idecode { width: 32px; height: 10px; border: 2px solid #7b5cc0; border-bottom: 0; margin-left: 16px; background: #8c2030; }
.ideicon { position: absolute; left: 985px; bottom: 0; }
.idenote { position: absolute; left: 1003px; top: 12px; }
.idebox.search { position: absolute; left: 1399px; bottom: 0; width: 293px; height: 12px; padding: 0 22px 0 8px; display: flex; justify-content: space-between; font-size: 14px; line-height: 20px; overflow: hidden; }
.idesplit { position: absolute; left: 1695px; top: 0; width: 12px; height: 26px; border: solid #3a3a3a; border-width: 0 2px; }
</style>
